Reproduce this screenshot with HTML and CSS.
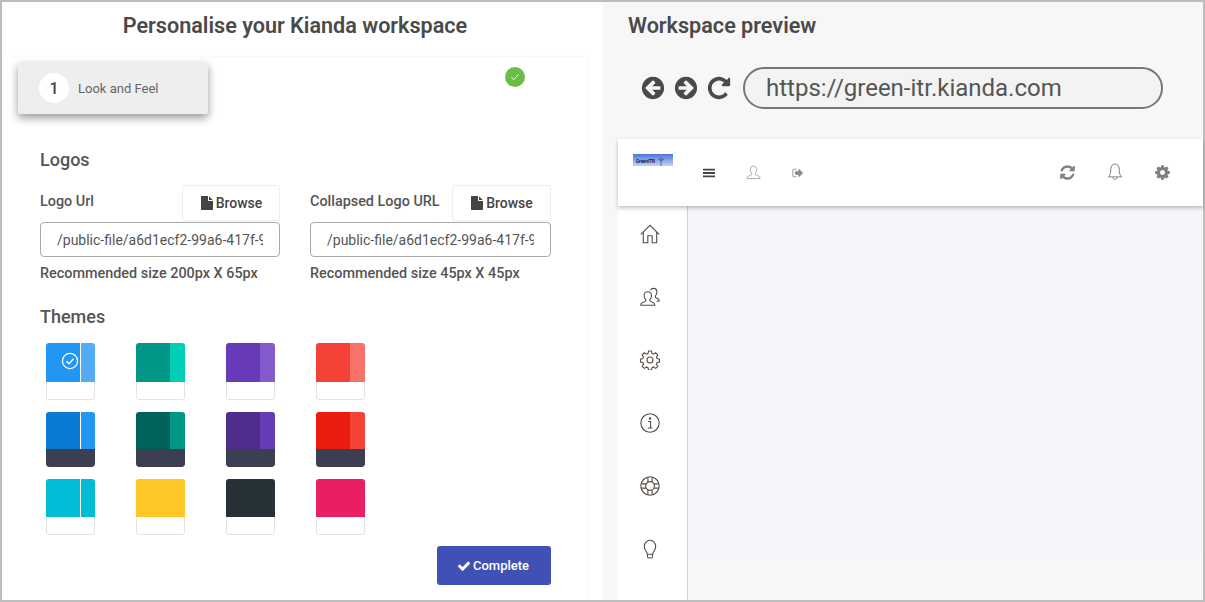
FILE: index.html
```html
<!DOCTYPE html>
<html lang="en">
<head>
    <meta charset="UTF-8">
    <title>Personalise your Kianda workspace</title>
    <link rel="stylesheet" href="styles.css">
</head>
<body>
    <div class="frame">
        <!-- Settings side -->
        <div class="settings">
            <h1 class="title title-center">Personalise your Kianda workspace</h1>
            <div class="card">
                <div class="steps">
                    <div class="step">
                        <span class="step-num">1</span>
                        <span>Look and Feel</span>
                    </div>
                    <span class="step-done">
                        <svg viewBox="0 0 20 20" width="12" height="12"><path d="M4 10.5l4 4 8-9" fill="none" stroke="#fff" stroke-width="1.4"/></svg>
                    </span>
                </div>

                <div class="form">
                    <h2 class="section">Logos</h2>
                    <div class="fields">
                        <div class="field">
                            <div class="field-head">
                                <label for="logoUrl">Logo Url</label>
                                <button type="button" class="browse">
                                    <svg class="fa" viewBox="0 0 1792 1792"><path d="M1152 512v-472q22 14 36 28l408 408q14 14 28 36h-472zm-128 32q0 40 28 68t68 28h544v1056q0 40-28 68t-68 28h-1344q-40 0-68-28t-28-68v-1600q0-40 28-68t68-28h800v544z"/></svg>
                                    Browse
                                </button>
                            </div>
                            <input type="text" id="logoUrl" class="input" value="/public-file/a6d1ecf2-99a6-417f-9c1b-73ad">
                            <p class="hint">Recommended size 200px X 65px</p>
                        </div>
                        <div class="field">
                            <div class="field-head">
                                <label for="collapsedUrl">Collapsed Logo URL</label>
                                <button type="button" class="browse">
                                    <svg class="fa" viewBox="0 0 1792 1792"><path d="M1152 512v-472q22 14 36 28l408 408q14 14 28 36h-472zm-128 32q0 40 28 68t68 28h544v1056q0 40-28 68t-68 28h-1344q-40 0-68-28t-28-68v-1600q0-40 28-68t68-28h800v544z"/></svg>
                                    Browse
                                </button>
                            </div>
                            <input type="text" id="collapsedUrl" class="input" value="/public-file/a6d1ecf2-99a6-417f-9c1b-73ad">
                            <p class="hint">Recommended size 45px X 45px</p>
                        </div>
                    </div>

                    <h2 class="section section-themes">Themes</h2>
                    <div class="themes">
                        <div class="swatch">
                            <div class="swatch-top">
                                <div class="swatch-main c-blue">
                                    <svg class="swatch-check" viewBox="0 0 18 18" width="18" height="18"><circle cx="9" cy="9" r="7.6" fill="none" stroke="#fff" stroke-width="1.3"/><path d="M5.4 9.2l2.6 2.6 4.6-5" fill="none" stroke="#fff" stroke-width="1.4"/></svg>
                                </div>
                                <div class="swatch-side swatch-line c-blue-light"></div>
                            </div>
                            <div class="swatch-foot"></div>
                        </div>
                        <div class="swatch">
                            <div class="swatch-top">
                                <div class="swatch-main c-teal"></div>
                                <div class="swatch-side c-teal-light"></div>
                            </div>
                            <div class="swatch-foot"></div>
                        </div>
                        <div class="swatch">
                            <div class="swatch-top">
                                <div class="swatch-main c-purple"></div>
                                <div class="swatch-side c-purple-light"></div>
                            </div>
                            <div class="swatch-foot"></div>
                        </div>
                        <div class="swatch">
                            <div class="swatch-top">
                                <div class="swatch-main c-red"></div>
                                <div class="swatch-side c-red-light"></div>
                            </div>
                            <div class="swatch-foot"></div>
                        </div>

                        <div class="swatch">
                            <div class="swatch-top">
                                <div class="swatch-main c-blue-dark"></div>
                                <div class="swatch-side swatch-line c-blue"></div>
                            </div>
                            <div class="swatch-foot foot-dark"></div>
                        </div>
                        <div class="swatch">
                            <div class="swatch-top">
                                <div class="swatch-main c-teal-dark"></div>
                                <div class="swatch-side c-teal"></div>
                            </div>
                            <div class="swatch-foot foot-dark"></div>
                        </div>
                        <div class="swatch">
                            <div class="swatch-top">
                                <div class="swatch-main c-purple-dark"></div>
                                <div class="swatch-side c-purple"></div>
                            </div>
                            <div class="swatch-foot foot-dark"></div>
                        </div>
                        <div class="swatch">
                            <div class="swatch-top">
                                <div class="swatch-main c-red-dark"></div>
                                <div class="swatch-side c-red"></div>
                            </div>
                            <div class="swatch-foot foot-dark"></div>
                        </div>

                        <div class="swatch">
                            <div class="swatch-top">
                                <div class="swatch-main c-cyan"></div>
                                <div class="swatch-side swatch-line c-cyan"></div>
                            </div>
                            <div class="swatch-foot"></div>
                        </div>
                        <div class="swatch">
                            <div class="swatch-top c-yellow"></div>
                            <div class="swatch-foot"></div>
                        </div>
                        <div class="swatch">
                            <div class="swatch-top c-slate"></div>
                            <div class="swatch-foot"></div>
                        </div>
                        <div class="swatch">
                            <div class="swatch-top c-pink"></div>
                            <div class="swatch-foot"></div>
                        </div>
                    </div>

                    <div class="actions">
                        <button type="button" class="complete">
                            <svg class="fa" viewBox="0 0 1792 1792"><path d="M1671 566q0 40-28 68l-724 724-136 136q-28 28-68 28t-68-28l-136-136-362-362q-28-28-28-68t28-68l136-136q28-28 68-28t68 28l294 295 656-657q28-28 68-28t68 28l136 136q28 28 28 68z"/></svg>
                            Complete
                        </button>
                    </div>
                </div>
            </div>
        </div>

        <!-- Preview side -->
        <div class="preview">
            <h1 class="title title-preview">Workspace preview</h1>
            <div class="browser-bar">
                <svg class="nav-icon" viewBox="0 0 1792 1792"><path d="M1408 960v-128q0-26-19-45t-45-19h-502l189-189q19-19 19-45t-19-45l-91-91q-18-18-45-18t-45 18l-362 362-91 91q-18 18-18 45t18 45l91 91 362 362q18 18 45 18t45-18l91-91q18-18 18-45t-18-45l-189-189h502q26 0 45-19t19-45zm256-64q0 209-103 385.5t-279.5 279.5-385.5 103-385.5-103-279.5-279.5-103-385.5 103-385.5 279.5-279.5 385.5-103 385.5 103 279.5 279.5 103 385.5z"/></svg>
                <svg class="nav-icon flip" viewBox="0 0 1792 1792"><path d="M1408 960v-128q0-26-19-45t-45-19h-502l189-189q19-19 19-45t-19-45l-91-91q-18-18-45-18t-45 18l-362 362-91 91q-18 18-18 45t18 45l91 91 362 362q18 18 45 18t45-18l91-91q18-18 18-45t-18-45l-189-189h502q26 0 45-19t19-45zm256-64q0 209-103 385.5t-279.5 279.5-385.5 103-385.5-103-279.5-279.5-103-385.5 103-385.5 279.5-279.5 385.5-103 385.5 103 279.5 279.5 103 385.5z"/></svg>
                <svg class="nav-icon" viewBox="0 0 1792 1792"><path d="M1664 256v448q0 26-19 45t-45 19h-448q-42 0-59-40-17-39 14-69l138-138q-148-137-349-137-104 0-198.5 40.5t-163.5 109.5-109.5 163.5-40.5 198.5 40.5 198.5 109.5 163.5 163.5 109.5 198.5 40.5q119 0 225-52t179-147q7-10 23-12 15 0 25 9l137 138q9 8 9.5 20.5t-7.5 22.5q-109 132-264 204.5t-327 72.5q-156 0-298-61t-245-164-164-245-61-298 61-298 164-245 245-164 298-61q147 0 284.5 55.5t244.5 156.5l130-129q29-31 70-14 39 17 39 59z"/></svg>
                <div class="url">https://green-itr.kianda.com</div>
            </div>

            <div class="app">
                <div class="app-head">
                    <div class="app-logo">
                        <span class="app-logo-text">GreenITR</span>
                        <svg class="app-logo-mill" viewBox="0 0 8 9" width="8" height="9"><path d="M4 3.500V9M4 3.500L.8 1.500M4 3.500L7.200 1.800M4 3.500L4.300 0" fill="none" stroke="#334" stroke-width=".6"/></svg>
                    </div>
                    <div class="head-left">
                        <svg class="head-bars" viewBox="0 0 12 10" width="12" height="10"><path d="M0 .8h12v1.800H0zM0 4.100h12v1.800H0zM0 7.400h12v1.800H0z" fill="#444"/></svg>
                        <svg class="head-user" viewBox="0 0 16 16" width="15" height="15"><path d="M8 1.200c-2.200 0-3.500 1.700-3.500 3.800 0 1.500.6 2.800 1.500 3.600.3.3.3 1.500-.3 1.900-1 .6-3.900 1.300-4.400 2.300-.2.500-.2 1.200-.2 1.700h13.800c0-.5 0-1.200-.2-1.700-.5-1-3.400-1.700-4.400-2.300-.6-.4-.6-1.600-.3-1.900.9-.8 1.500-2.100 1.500-3.600 0-2.100-1.300-3.800-3.500-3.800z" fill="none" stroke="#9a9a9a" stroke-width=".9"/></svg>
                        <svg class="head-out" viewBox="0 0 1792 1792" width="12" height="12"><path fill="#8a8a8a" d="M704 1440q0 4 1 20t.5 26.500-3 23.500-10 19.500-20.500 6.500h-320q-119 0-203.500-84.500t-84.500-203.500v-704q0-119 84.500-203.500t203.500-84.500h320q13 0 22.500 9.500t9.500 22.500q0 4 1 20t.5 26.500-3 23.500-10 19.500-20.500 6.500h-320q-66 0-113 47t-47 113v704q0 66 47 113t113 47h312l11.500 1 11.500 3 8 5.500 7 9 2 13.500zm928-544q0 26-19 45l-544 544q-19 19-45 19t-45-19-19-45v-288h-448q-26 0-45-19t-19-45v-384q0-26 19-45t45-19h448v-288q0-26 19-45t45-19 45 19l544 544q19 19 19 45z"/></svg>
                    </div>
                    <div class="head-right">
                        <svg viewBox="0 0 1792 1792" width="17" height="17"><path fill="#808080" d="M1639 1056q0 5-1 7-64 268-268 434.5t-478 166.5q-146 0-282.5-55t-243.5-157l-129 129q-19 19-45 19t-45-19-19-45v-448q0-26 19-45t45-19h448q26 0 45 19t19 45-19 45l-137 137q71 66 161 102t187 36q134 0 250-65t186-179q11-17 53-117 8-23 30-23h192q13 0 22.5 9.5t9.5 22.5zm25-800v448q0 26-19 45t-45 19h-448q-26 0-45-19t-19-45 19-45l138-138q-148-137-349-137-134 0-250 65t-186 179q-11 17-53 117-8 23-30 23h-199q-13 0-22.5-9.5t-9.5-22.5v-7q65-268 270-434.5t480-166.5q146 0 284 55.5t245 156.5l130-129q19-19 45-19t45 19 19 45z"/></svg>
                        <svg viewBox="0 0 16 19" width="16" height="19"><path d="M8 1C5.400 1 3.800 3.100 3.800 6c0 4.200-.7 6.100-2.300 7.900h13c-1.600-1.800-2.300-3.700-2.300-7.900C12.200 3.100 10.600 1 8 1zM6 14.100c0 1.300.9 2.400 2 2.400s2-1.100 2-2.400" fill="none" stroke="#808080" stroke-width="1"/></svg>
                        <svg viewBox="0 0 1792 1792" width="17" height="17"><path fill="#808080" d="M1152 896q0-106-75-181t-181-75-181 75-75 181 75 181 181 75 181-75 75-181zm512-109v222q0 12-8 23t-20 13l-185 28q-19 54-39 91 35 50 107 138 10 12 10 25t-9 23q-27 37-99 108t-94 71q-12 0-26-9l-138-108q-44 23-91 38-16 136-29 186-7 28-36 28h-222q-14 0-24.500-8.500t-11.500-21.500l-28-184q-49-16-90-37l-141 107q-10 9-25 9-14 0-25-11-126-114-165-168-7-10-7-23 0-12 8-23 15-21 51-66.500t54-70.500q-27-50-41-99l-183-27q-13-2-21-12.500t-8-23.500v-222q0-12 8-23t19-13l186-28q14-46 39-92-40-57-107-138-10-12-10-24 0-10 9-23 26-36 98.500-107.500t94.500-71.500q13 0 26 10l138 107q44-23 91-38 16-136 29-186 7-28 36-28h222q14 0 24.500 8.500t11.500 21.500l28 184q49 16 90 37l142-107q9-9 24-9 13 0 25 10 129 119 165 170 7 8 7 22 0 12-8 23-15 21-51 66.500t-54 70.500q26 50 41 98l183 28q13 2 21 12.500t8 23.500z"/></svg>
                    </div>
                </div>
                <div class="app-body">
                    <div class="app-side">
                        <svg class="side-icon" viewBox="0 0 20 20"><path d="M.8 10.300L10 1.300l9.200 9M3.300 8v10.700h4.500v-7h4.400v7h4.500V8"/></svg>
                        <svg class="side-icon" viewBox="0 0 20 20"><path d="M7.800 4.800c-2.300 0-3.700 1.700-3.700 4 0 1.500.6 2.900 1.500 3.700.3.300.3 1.500-.3 1.900-1 .6-3.700 1.300-4.200 2.300-.2.400-.2 1-.2 1.500h13.800c0-.5 0-1.100-.2-1.500-.5-1-3.200-1.700-4.200-2.300-.6-.4-.6-1.600-.3-1.900.9-.8 1.500-2.200 1.500-3.700 0-2.300-1.400-4-3.700-4zM10.500 3.200c.5-1.100 1.500-1.800 2.900-1.800 2.200 0 3.500 1.700 3.500 3.900 0 1.400-.6 2.800-1.400 3.500-.3.300-.3 1.400.3 1.800.9.500 2.600 1.200 3.100 2.100.2.400.2 1 .2 1.500h-2.600"/></svg>
                        <svg class="side-icon" viewBox="0 0 20 20"><circle cx="10" cy="10" r="3"/><path d="M8.500 1h3l.5 2.500 1.500.7 2.200-1.400 2.100 2.100-1.400 2.200.7 1.500 2.400.5v3l-2.400.5-.7 1.500 1.400 2.200-2.100 2.100-2.200-1.400-1.500.7-.5 2.400h-3l-.5-2.400-1.500-.7-2.200 1.400-2.100-2.100 1.400-2.200-.7-1.500-2.400-.5v-3l2.400-.5.700-1.500-1.400-2.200 2.100-2.100 2.200 1.400 1.500-.7z"/></svg>
                        <svg class="side-icon" viewBox="0 0 20 20"><circle cx="10" cy="10" r="9.200"/><circle cx="10" cy="5.600" r=".7"/><path d="M8 8.500h2.600v6.300M7.800 15h4.600"/></svg>
                        <svg class="side-icon" viewBox="0 0 20 20"><circle cx="10" cy="10" r="9.200"/><circle cx="10" cy="10" r="4.400"/><path d="M7.900 1.100v5M12.100 1.100v5M7.900 13.900v5M12.100 13.900v5M1.100 7.900h5M1.100 12.100h5M13.900 7.900h5M13.900 12.100h5"/></svg>
                        <svg class="side-icon" viewBox="0 0 20 20"><path d="M7.300 15.200c0-2.500-3-3.900-3-7.700C4.300 4 6.800 1.200 10 1.200s5.700 2.800 5.700 6.300c0 3.800-3 5.200-3 7.700zM7.500 15.200v2.300c0 .8.700 1.500 1.500 1.500h2c.8 0 1.500-.7 1.500-1.500v-2.300"/></svg>
                    </div>
                    <div class="app-main"></div>
                </div>
            </div>
        </div>
    </div>
</body>
</html>
```

FILE: styles.css
```css
* {
    box-sizing: border-box;
}

html, body {
    margin: 0;
    height: 100%;
}

body {
    font-family: Roboto, "Liberation Sans", sans-serif;
    color: #555;
    overflow: hidden;
}

.frame {
    display: flex;
    width: 1205px;
    height: 602px;
    border: 2px solid #bdbdbd;
    background-color: #fff;
}

.title {
    margin: 0;
    font-size: 21.6px;
    font-weight: 600;
    line-height: 24px;
    color: #4a4a4a;
}

/* Left side */
.settings {
    display: flex;
    flex-direction: column;
    flex: 0 0 601px;
    padding-right: 15px;
}

.title-center {
    padding-top: 12px;
    height: 55px;
    text-align: center;
}

.card {
    flex: 1;
    margin-left: 6px;
    padding: 5px 0 0 10px;
    box-shadow: 0 0 2px rgba(0, 0, 0, 0.08);
    clip-path: inset(-4px -4px 0 -4px);
}

.steps {
    display: flex;
    align-items: flex-start;
}

.step {
    display: flex;
    align-items: center;
    gap: 9px;
    width: 190px;
    height: 52px;
    padding-left: 21px;
    font-size: 13px;
    color: #666;
    background-color: #eee;
    box-shadow: 0 4px 8px rgba(0, 0, 0, 0.4);
    border-radius: 2px;
}

.step-num {
    display: flex;
    align-items: center;
    justify-content: center;
    width: 30px;
    height: 30px;
    font-size: 16px;
    font-weight: 500;
    color: #444;
    background-color: #fff;
    border-radius: 50%;
}

.step-done {
    display: flex;
    align-items: center;
    justify-content: center;
    width: 20px;
    height: 20px;
    margin: 5px 0 0 297px;
    background-color: #6cbd45;
    border-radius: 50%;
}

.form {
    width: 533px;
    padding: 36px 0 0 22px;
}

.section {
    margin: 0;
    font-size: 18px;
    font-weight: 500;
    line-height: 20px;
    color: #555;
}

.section-themes {
    margin-top: 24px;
}

.fields {
    display: grid;
    grid-template-columns: 240px 241px;
    column-gap: 30px;
    margin-top: 15px;
}

.field-head {
    display: flex;
    justify-content: space-between;
    height: 37px;
}

.field-head label {
    padding-top: 8px;
    font-size: 14.4px;
    font-weight: 500;
    line-height: 18px;
}

.browse {
    display: flex;
    align-items: center;
    gap: 2px;
    justify-content: center;
    width: 98px;
    height: 36px;
    padding: 0;
    font: 500 14px Roboto, sans-serif;
    color: #444;
    background-color: #fff;
    border: 1px solid #eee;
    border-radius: 2px;
}

.field + .field .browse {
    width: 99px;
}

.fa {
    width: 14px;
    height: 14px;
    fill: currentColor;
}

.input {
    display: block;
    width: 100%;
    height: 35px;
    padding: 0 16px;
    font: 14px Roboto, sans-serif;
    color: #555;
    border: 1px solid #aaa;
    border-radius: 4px;
}

.hint {
    margin: 8px 0 0;
    font-size: 14.4px;
    font-weight: 500;
    line-height: 18px;
}

.themes {
    display: grid;
    grid-template-columns: repeat(4, 49px);
    grid-template-rows: 57px 55px 56px;
    gap: 12px 41px;
    margin: 16px 0 0 6px;
}

.swatch {
    display: flex;
    flex-direction: column;
    overflow: hidden;
    border-radius: 3px;
}

.swatch-top {
    display: flex;
    flex: 1;
}

.swatch-main {
    flex: 0 0 34px;
    display: flex;
    align-items: center;
    justify-content: flex-end;
    padding-right: 1px;
}

.swatch-check {
    margin-top: -4px;
}

.swatch-side {
    flex: 1;
}

.swatch-line {
    border-left: 1px solid #fff;
}

.swatch-foot {
    height: 18px;
    border: 1px solid #e3e3e3;
    border-top: 0;
    border-radius: 0 0 3px 3px;
}

.foot-dark {
    background-color: #3b3f51;
    border: 0;
}

.c-blue { background-color: #2196f3; }
.c-blue-light { background-color: #53adf6; }
.c-blue-dark { background-color: #0b7ad5; }
.c-teal { background-color: #009688; }
.c-teal-light { background-color: #00cdb6; }
.c-teal-dark { background-color: #00635b; }
.c-purple { background-color: #673ab7; }
.c-purple-light { background-color: #845bca; }
.c-purple-dark { background-color: #4f2d8c; }
.c-red { background-color: #f44336; }
.c-red-light { background-color: #f7736a; }
.c-red-dark { background-color: #ea1c0d; }
.c-cyan { background-color: #00bcd4; }
.c-yellow { background-color: #ffc627; }
.c-slate { background-color: #263238; }
.c-pink { background-color: #e91e63; }

.actions {
    display: flex;
    justify-content: flex-end;
    margin-top: 11px;
}

.complete {
    display: flex;
    align-items: center;
    justify-content: center;
    gap: 2px;
    width: 114px;
    height: 39px;
    padding: 0 2px 0 0;
    font: 500 13px Roboto, sans-serif;
    color: #fff;
    background-color: #3f51b5;
    border: 0;
    border-radius: 3px;
}

/* Right side */
.preview {
    display: flex;
    flex-direction: column;
    flex: 1;
    padding-left: 15px;
    background-color: #f7f7f7;
}

.title-preview {
    padding: 12px 0 0 10px;
    height: 65px;
}

.browser-bar {
    display: flex;
    align-items: center;
    height: 42px;
    padding-left: 22px;
    gap: 7px;
}

.nav-icon {
    width: 26px;
    height: 26px;
    fill: #4a4a4a;
}

.flip {
    transform: scaleX(-1);
}

.url {
    width: 420px;
    height: 42px;
    margin-left: 4px;
    padding-left: 21px;
    font-size: 24px;
    line-height: 38px;
    color: #555;
    background-color: #f3f3f3;
    border: 2px solid #777;
    border-radius: 21px;
}

.app {
    display: flex;
    flex-direction: column;
    flex: 1;
    margin-top: 30px;
    min-height: 0;
}

.app-head {
    position: relative;
    z-index: 1;
    display: flex;
    flex: 0 0 67px;
    background-color: #fff;
    box-shadow: 0 2px 4px rgba(0, 0, 0, 0.25);
}

.app-logo {
    display: flex;
    align-items: flex-end;
    justify-content: space-between;
    width: 40px;
    height: 12px;
    margin: 15px 0 0 15px;
    padding: 0 8px 0 3px;
    background: linear-gradient(#4c76da, #c3d3f5);
}

.app-logo-text {
    padding-bottom: 2px;
    font-size: 4.5px;
    line-height: 5px;
    font-weight: 700;
    color: #223;
}

.head-left {
    display: flex;
    align-items: center;
    gap: 31px;
    margin-left: 30px;
}

.head-right {
    display: flex;
    align-items: center;
    gap: 31px;
    margin: 0 32px 0 auto;
}

.app-body {
    display: flex;
    flex: 1;
    min-height: 0;
}

.app-side {
    display: flex;
    flex-direction: column;
    align-items: center;
    gap: 43px;
    flex: 0 0 70px;
    padding: 18px 6px 0 0;
    background-color: #fff;
    border-right: 1px solid #d0d0d0;
}

.side-icon {
    flex: 0 0 20px;
    width: 20px;
    height: 20px;
    fill: none;
    stroke: #554d48;
    stroke-width: 1.1;
}

.app-main {
    flex: 1;
    height: 347px;
    background-color: #f5f6fa;
}
```
